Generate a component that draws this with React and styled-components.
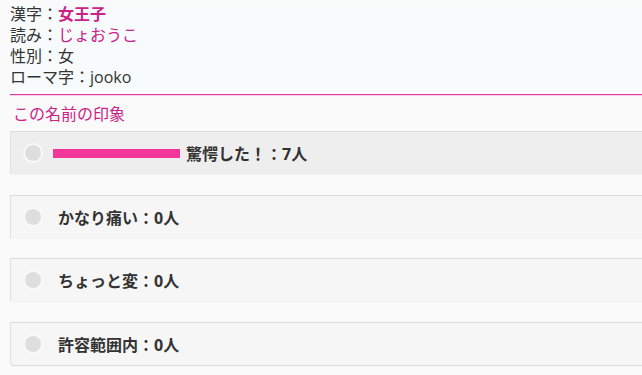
import React from "react";
import styled, { createGlobalStyle } from "styled-components";

const GlobalStyle = createGlobalStyle`
  html, body {
    margin: 0;
    padding: 0;
    background: #fafafa;
  }
  body {
    font-family: "Open Sans", "Noto Sans CJK JP", sans-serif;
    color: #333;
  }
`;

const Page = styled.div`
  padding: 4px 0 0 10px;
  overflow: hidden;
`;

const Info = styled.div`
  background: #f8fbfc;
  padding-bottom: 6px;
  border-bottom: 1px solid #e23a9c;
  box-shadow: 0 1px 0 #f6d2e8;
  font-size: 16px;
  line-height: 21px;
`;

const InfoLine = styled.div`
  color: #333;
`;

const Value = styled.span`
  color: ${(p) => (p.$pink ? "#cc2288" : "#333")};
  font-weight: ${(p) => (p.$bold ? 700 : 400)};
`;

const Heading = styled.div`
  color: #cc2288;
  font-size: 16px;
  line-height: 21px;
  padding: 9px 0 0 3px;
  margin-bottom: 6px;
`;

const List = styled.div`
  display: flex;
  flex-direction: column;
  gap: 20.5px;
`;

const Row = styled.label`
  display: flex;
  align-items: center;
  height: 42px;
  padding-left: 14px;
  background: ${(p) => (p.$active ? "#eeeeee" : "#f6f6f6")};
  border-top: 1px solid #dcdcdc;
  border-left: 1px solid #e2e2e2;
  border-bottom: ${(p) => (p.$last ? "1px solid #dcdcdc" : "0")};
  border-bottom-left-radius: ${(p) => (p.$last ? "4px" : "0")};
  box-shadow: 0 1px 0 #f2f2f2;
`;

const Dot = styled.span`
  width: 16px;
  height: 16px;
  border-radius: 50%;
  background: #dedede;
  box-shadow: 0 0 0 2px #f9f9f9;
  flex-shrink: 0;
`;

const Bar = styled.span`
  display: inline-block;
  height: 9px;
  background: #f2369a;
  margin: 0 6px 0 12px;
  flex-shrink: 0;
`;

const Label = styled.span`
  font-size: 16px;
  font-weight: 700;
  color: #333;
  margin-left: ${(p) => (p.$withBar ? "0" : "17px")};
`;

const votes = [
  { name: "驚愕した！", count: 7 },
  { name: "かなり痛い", count: 0 },
  { name: "ちょっと変", count: 0 },
  { name: "許容範囲内", count: 0 },
];

export default function App() {
  const max = Math.max(...votes.map((v) => v.count));
  return (
    <>
      <GlobalStyle />
      <Page>
        <Info>
          <InfoLine>
            漢字：<Value $pink $bold>女王子</Value>
          </InfoLine>
          <InfoLine>
            読み：<Value $pink>じょおうこ</Value>
          </InfoLine>
          <InfoLine>性別：女</InfoLine>
          <InfoLine>ローマ字：jooko</InfoLine>
        </Info>
        <Heading>この名前の印象</Heading>
        <List>
          {votes.map((v, i) => (
            <Row key={v.name} $active={i === 0} $last={i === votes.length - 1}>
              <Dot />
              {v.count > 0 && (
                <Bar style={{ width: `${(v.count / max) * 127}px` }} />
              )}
              <Label $withBar={v.count > 0}>
                {v.name}：{v.count}人
              </Label>
            </Row>
          ))}
        </List>
      </Page>
    </>
  );
}
